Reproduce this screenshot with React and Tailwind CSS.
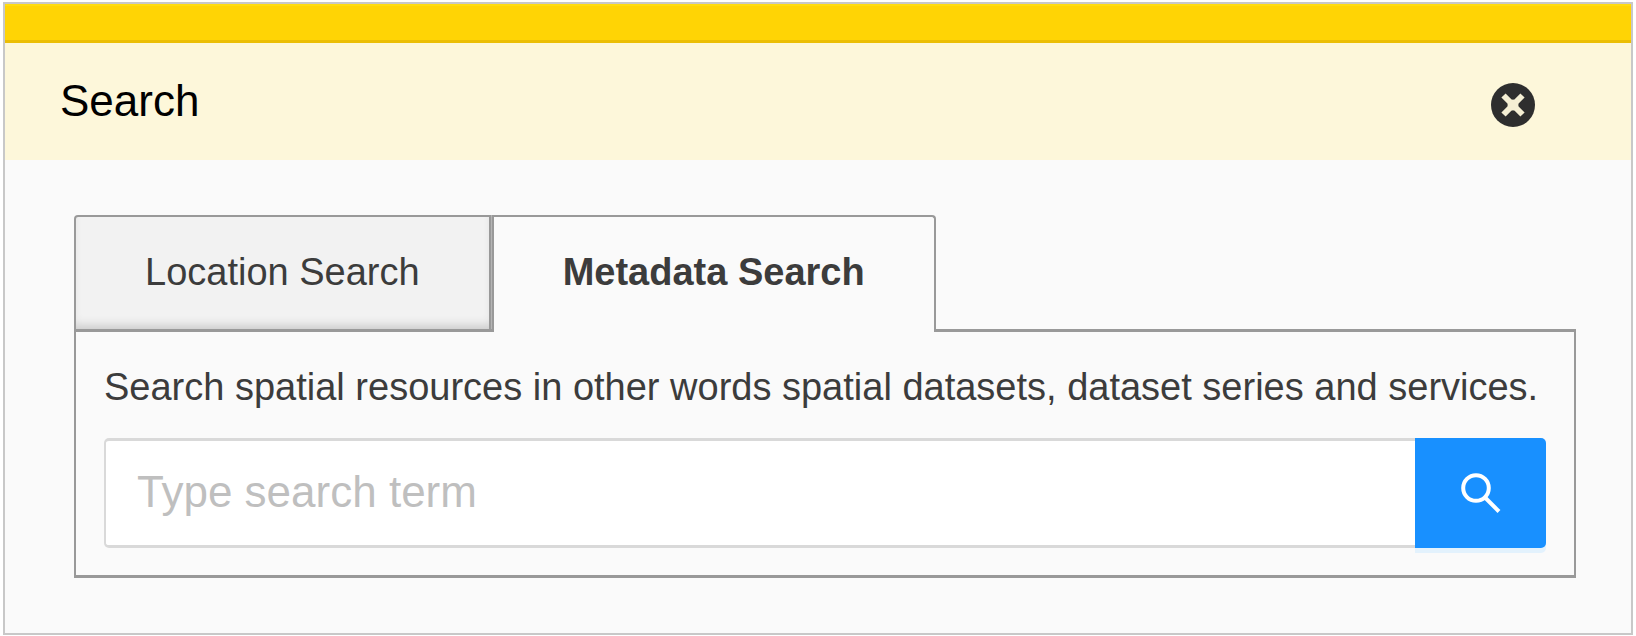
import React, { useState } from 'react';

const CloseIcon = () => (
  <svg viewBox="0 0 44 44" className="h-11 w-11" aria-hidden="true">
    <circle cx="22" cy="22" r="22" fill="#2e2e2e" />
    <path d="M12.5 12.5L31.5 31.5M31.5 12.5L12.5 31.5" stroke="#f5efd4" strokeWidth="6" />
    <circle cx="22" cy="22" r="5.5" fill="#f5efd4" />
  </svg>
);

const SearchIcon = () => (
  <svg viewBox="0 0 40 40" className="h-10 w-10" fill="none" stroke="#ffffff" strokeWidth="4" aria-hidden="true">
    <circle cx="15" cy="15" r="12.8" />
    <path d="M24 24.5L38 38.5" />
  </svg>
);

const Tab = ({ label, active, first, onClick }) => (
  <button
    type="button"
    role="tab"
    aria-selected={active}
    onClick={onClick}
    className={`border-x-2 border-t-2 border-[#999999] px-[69px] text-[38px] leading-[110px] text-[#3c3c3c] ${
      first ? 'rounded-tl-[4px]' : 'rounded-tr-[4px]'
    } ${
      active
        ? 'relative -mb-[3px] bg-[#fafafa] pb-[5px] font-bold'
        : 'bg-[#f2f2f2] pb-0.5 shadow-[inset_0_-8px_10px_-4px_#cccccc]'
    }`}
  >
    {label}
  </button>
);

const App = () => {
  const [tab, setTab] = useState('metadata');
  const [term, setTerm] = useState('');

  return (
    <div className="bg-white px-[3px] pt-0.5 pb-px font-['Liberation_Sans',Arial,sans-serif]">
      <section className="border-2 border-[#c8c8c8] bg-[#fafafa]">
        {/* Title bar */}
        <div className="h-[39px] border-t-2 border-b-3 border-t-[#ffdc0f] border-b-[#ebbe05] bg-[#ffd405]"></div>
        <header className="flex h-[117px] items-center justify-between bg-[#fdf7da] pr-24 pl-[55px]">
          <h1 className="pb-0.5 text-[44px] leading-[60px] text-black">Search</h1>
          <button type="button" aria-label="Close" className="pt-1.5">
            <CloseIcon />
          </button>
        </header>

        <div className="px-[55px] pt-[55px] pb-[55px] pl-[69px]">
          {/* Tabs */}
          <div role="tablist" className="flex">
            <Tab label="Location Search" first active={tab === 'location'} onClick={() => setTab('location')} />
            <div className="w-px bg-[#b4b4b4]"></div>
            <Tab label="Metadata Search" active={tab === 'metadata'} onClick={() => setTab('metadata')} />
          </div>

          {/* Search panel */}
          <div role="tabpanel" className="border-x-2 border-y-3 border-[#999999] px-7 pt-[27px] pb-[27px]">
            <label htmlFor="term" className="block text-[38px] leading-[56px] whitespace-nowrap text-[#3c3c3c]">
              Search spatial resources in other words spatial datasets, dataset series and services.
            </label>
            <form className="mt-[23px] flex" onSubmit={(e) => e.preventDefault()}>
              <input
                id="term"
                type="text"
                value={term}
                onChange={(e) => setTerm(e.target.value)}
                placeholder="Type search term"
                className="h-[110px] min-w-0 flex-1 rounded-l-[5px] border-y-3 border-l-2 border-[#d9d9d9] bg-white px-[31px] pb-0.5 text-[44px] text-[#3c3c3c] outline-none placeholder:text-[#bfbfbf]"
              />
              <button
                type="submit"
                aria-label="Search"
                className="flex h-[110px] w-[131px] items-center justify-center rounded-r-[5px] bg-[#1890ff] shadow-[0_5px_0_#e3f2fd]"
              >
                <SearchIcon />
              </button>
            </form>
          </div>
        </div>
      </section>
    </div>
  );
};

export default App;
